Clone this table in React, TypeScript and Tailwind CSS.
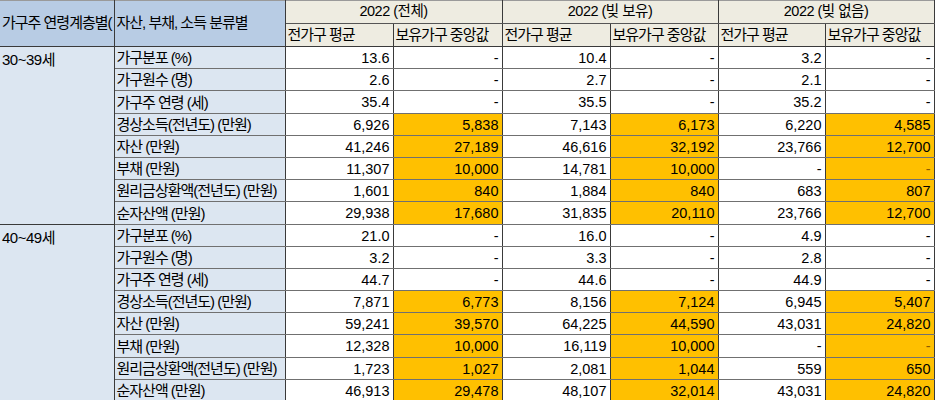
import React from "react";

type Row = { label: string; vals: string[] };

const groups: { name: string; rows: Row[] }[] = [
  {
    name: "30~39세",
    rows: [
      { label: "가구분포 (%)", vals: ["13.6", "-", "10.4", "-", "3.2", "-"] },
      { label: "가구원수 (명)", vals: ["2.6", "-", "2.7", "-", "2.1", "-"] },
      { label: "가구주 연령 (세)", vals: ["35.4", "-", "35.5", "-", "35.2", "-"] },
      { label: "경상소득(전년도) (만원)", vals: ["6,926", "5,838", "7,143", "6,173", "6,220", "4,585"] },
      { label: "자산 (만원)", vals: ["41,246", "27,189", "46,616", "32,192", "23,766", "12,700"] },
      { label: "부채 (만원)", vals: ["11,307", "10,000", "14,781", "10,000", "-", "-"] },
      { label: "원리금상환액(전년도) (만원)", vals: ["1,601", "840", "1,884", "840", "683", "807"] },
      { label: "순자산액 (만원)", vals: ["29,938", "17,680", "31,835", "20,110", "23,766", "12,700"] },
    ],
  },
  {
    name: "40~49세",
    rows: [
      { label: "가구분포 (%)", vals: ["21.0", "-", "16.0", "-", "4.9", "-"] },
      { label: "가구원수 (명)", vals: ["3.2", "-", "3.3", "-", "2.8", "-"] },
      { label: "가구주 연령 (세)", vals: ["44.7", "-", "44.6", "-", "44.9", "-"] },
      { label: "경상소득(전년도) (만원)", vals: ["7,871", "6,773", "8,156", "7,124", "6,945", "5,407"] },
      { label: "자산 (만원)", vals: ["59,241", "39,570", "64,225", "44,590", "43,031", "24,820"] },
      { label: "부채 (만원)", vals: ["12,328", "10,000", "16,119", "10,000", "-", "-"] },
      { label: "원리금상환액(전년도) (만원)", vals: ["1,723", "1,027", "2,081", "1,044", "559", "650"] },
      { label: "순자산액 (만원)", vals: ["46,913", "29,478", "48,107", "32,014", "43,031", "24,820"] },
    ],
  },
];

const heights = [22, 22, 23, 22, 22, 22, 22, 23, 22, 22, 22, 22, 22, 23, 22, 22];

const font = { fontFamily: '"Liberation Sans", "Noto Sans CJK KR", sans-serif' };

export default function App() {
  let idx = 0;
  return (
    <div className="w-[936px] h-[400px] overflow-hidden bg-white" style={font}>
      <table className="table-fixed border-collapse w-[934px] text-black">
        <colgroup>
          <col className="w-[114px]" />
          <col className="w-[171px]" />
          <col className="w-[108px]" />
          <col className="w-[109px]" />
          <col className="w-[108px]" />
          <col className="w-[108px]" />
          <col className="w-[107px]" />
          <col className="w-[109px]" />
        </colgroup>
        <thead>
          <tr className="h-[22px]">
            <th
              rowSpan={2}
              className="bg-[#b8cce4] border-t border-t-[#9a9a9a] border-r border-r-[#3a3a3a] border-b border-b-[#3a3a3a] px-[2px] text-left font-normal text-[15px] tracking-[-1px] whitespace-nowrap overflow-hidden"
            >
              가구주 연령계층별(
            </th>
            <th
              rowSpan={2}
              className="bg-[#b8cce4] border-t border-t-[#9a9a9a] border-r border-r-[#3a3a3a] border-b border-b-[#3a3a3a] px-[2px] text-left font-normal text-[15px] tracking-[-1px] whitespace-nowrap overflow-hidden"
            >
              자산, 부채, 소득 분류별
            </th>
            {["2022 (전체)", "2022 (빚 보유)", "2022 (빚 없음)"].map((h) => (
              <th
                key={h}
                colSpan={2}
                className="bg-[#eeece1] border-t border-t-[#9a9a9a] border-r border-r-[#3a3a3a] border-b border-b-[#555555] text-center font-normal text-[14.5px] tracking-[-0.5px] whitespace-nowrap p-0"
              >
                {h}
              </th>
            ))}
          </tr>
          <tr className="h-[22px]">
            {[0, 1, 2].map((k) => (
              <React.Fragment key={k}>
                <th className="bg-[#eeece1] border-r border-r-[#3a3a3a] border-b border-b-[#3a3a3a] px-[2px] text-left font-normal text-[15px] tracking-[-1px] whitespace-nowrap overflow-hidden">
                  전가구 평균
                </th>
                <th className="bg-[#eeece1] border-r border-r-[#3a3a3a] border-b border-b-[#3a3a3a] px-[2px] text-left font-normal text-[15px] tracking-[-1px] whitespace-nowrap overflow-hidden">
                  보유가구 중앙값
                </th>
              </React.Fragment>
            ))}
          </tr>
        </thead>
        <tbody>
          {groups.map((g) =>
            g.rows.map((r, i) => {
              const h = heights[idx++];
              const orange = r.vals[1] !== "-";
              return (
                <tr key={g.name + i} style={{ height: h }}>
                  {i === 0 && (
                    <td
                      rowSpan={8}
                      className="bg-[#dce6f1] border-r border-r-[#3a3a3a] border-b border-b-[#3a3a3a] align-top px-[2px] pt-[2px] text-[15px] tracking-[-0.5px] whitespace-nowrap"
                    >
                      {g.name}
                    </td>
                  )}
                  <td className="bg-[#dce6f1] border-r border-r-[#3a3a3a] border-b border-b-[#707070] px-[2px] py-0 text-[15px] tracking-[-1px] whitespace-nowrap overflow-hidden leading-none">
                    {r.label}
                  </td>
                  {r.vals.map((v, j) => {
                    const isOrange = orange && j % 2 === 1;
                    return (
                      <td
                        key={j}
                        className={
                          (isOrange ? "bg-[#ffc000] " : "bg-white ") +
                          "border-r border-r-[#3a3a3a] border-b border-b-[#707070] text-right pr-[3px] pl-0 py-0 text-[14.5px] whitespace-nowrap leading-none " +
                          (isOrange && v === "-" ? "text-[#8a5a00]" : "text-black")
                        }
                      >
                        {v}
                      </td>
                    );
                  })}
                </tr>
              );
            })
          )}
        </tbody>
      </table>
    </div>
  );
}
